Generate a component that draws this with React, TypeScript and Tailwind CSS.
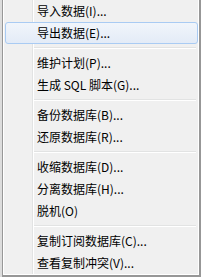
const groups: { label: string; hover?: boolean }[][] = [
  [{ label: '导入数据(I)...' }, { label: '导出数据(E)...', hover: true }],
  [{ label: '维护计划(P)...' }, { label: '生成 SQL 脚本(G)...' }],
  [{ label: '备份数据库(B)...' }, { label: '还原数据库(R)...' }],
  [{ label: '收缩数据库(D)...' }, { label: '分离数据库(H)...' }, { label: '脱机(O)' }],
  [{ label: '复制订阅数据库(C)...' }, { label: '查看复制冲突(V)...' }],
]

function Item({ label, hover }: { label: string; hover?: boolean }) {
  return (
    <div className="relative h-[22px]">
      {hover && (
        <div className="absolute left-[1px] right-0 top-0 h-[22px] rounded-[3px] border border-[#a9cbf3] bg-gradient-to-b from-[#f1f5fb] to-[#e3ebf7]" />
      )}
      <span className="absolute left-[33px] top-0 h-[22px] leading-[22px] text-[12px] text-black whitespace-nowrap">
        {label}
      </span>
    </div>
  )
}

export default function App() {
  return (
    <div
      className="w-[201px] h-[277px] flex bg-[#dcdcdc] overflow-hidden"
      style={{ fontFamily: '"Segoe UI", "Noto Sans CJK SC", "Noto Sans", sans-serif' }}
    >
      <div className="ml-[2px] flex-1 flex flex-col border-l border-r-2 border-b-2 border-[#979797] bg-white">
        <div className="flex-1 flex flex-col mr-[1px] mb-[1px] ml-[1px] bg-[#f0f0f0] relative">
          <div className="absolute left-[28px] top-0 bottom-0 w-[1px] bg-[#e2e3e3]" />
          <div className="absolute left-[29px] top-0 bottom-0 w-[1px] bg-white" />
          {groups.map((g, i) => (
            <div key={i}>
              {i > 0 && (
                <div className="h-[8px] flex flex-col justify-center pl-[29px] pr-[2px]">
                  <div className="h-[1px] bg-[#e2e3e3]" />
                  <div className="h-[1px] bg-white" />
                </div>
              )}
              {g.map((it) => (
                <Item key={it.label} label={it.label} hover={it.hover} />
              ))}
            </div>
          ))}
        </div>
      </div>
    </div>
  )
}
